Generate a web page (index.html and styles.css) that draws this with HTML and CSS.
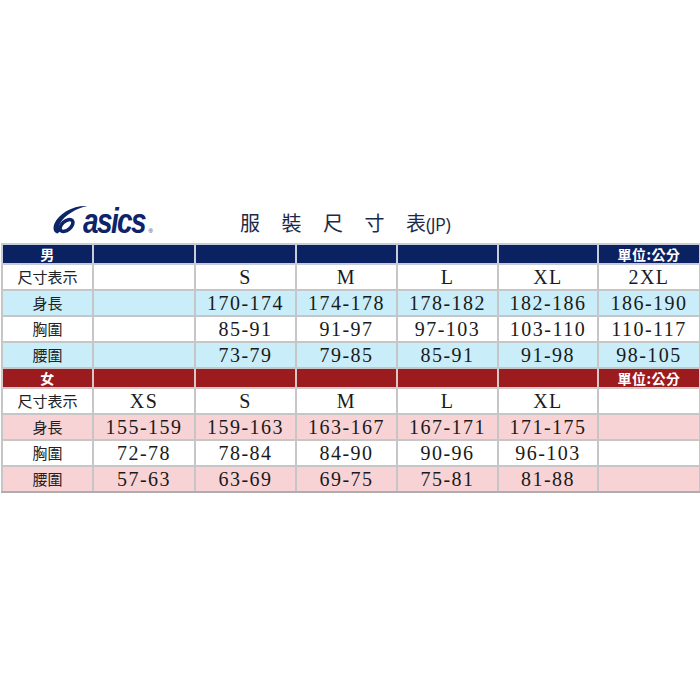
FILE: index.html
```html
<!DOCTYPE html>
<html lang="zh-Hant">
<head>
<meta charset="utf-8">
<link rel="stylesheet" href="styles.css">
</head>
<body>
<div class="page">
  <div class="top">
    <div class="logo">
      <svg class="swoosh" width="38" height="30" viewBox="0 0 36 30">
        <path d="M35.5 1 C22 0 7 8 2.5 18.5 C0.5 23.5 1.5 27.5 5.5 28.5 L8.8 25.8 C6.5 24.8 6.3 21.5 8.3 18 C13 10 24 3.5 35.5 1 Z" fill="#0d2469"/>
        <ellipse cx="14.5" cy="20.5" rx="7.6" ry="4.4" transform="rotate(-40 14.5 20.5)" fill="none" stroke="#0d2469" stroke-width="3.6"/>
      </svg>
      <span class="word">asics</span><span class="reg">®</span>
    </div>
    <div class="title">服 裝 尺 寸 表<span class="jp">(JP)</span></div>
  </div>
  <table class="chart">
    <colgroup>
      <col class="c1"><col class="c2"><col class="c3"><col class="c4"><col class="c5"><col class="c6"><col class="c7">
    </colgroup>
    <tbody>
      <tr class="head men"><th>男</th><th></th><th></th><th></th><th></th><th></th><th>單位:公分</th></tr>
      <tr class="plain"><td class="lbl">尺寸表示</td><td></td><td>S</td><td>M</td><td>L</td><td>XL</td><td>2XL</td></tr>
      <tr class="blue"><td class="lbl">身長</td><td></td><td>170-174</td><td>174-178</td><td>178-182</td><td>182-186</td><td>186-190</td></tr>
      <tr class="plain"><td class="lbl">胸圍</td><td></td><td>85-91</td><td>91-97</td><td>97-103</td><td>103-110</td><td>110-117</td></tr>
      <tr class="blue"><td class="lbl">腰圍</td><td></td><td>73-79</td><td>79-85</td><td>85-91</td><td>91-98</td><td>98-105</td></tr>
      <tr class="head women"><th>女</th><th></th><th></th><th></th><th></th><th></th><th>單位:公分</th></tr>
      <tr class="plain"><td class="lbl">尺寸表示</td><td>XS</td><td>S</td><td>M</td><td>L</td><td>XL</td><td></td></tr>
      <tr class="pink"><td class="lbl">身長</td><td>155-159</td><td>159-163</td><td>163-167</td><td>167-171</td><td>171-175</td><td></td></tr>
      <tr class="plain"><td class="lbl">胸圍</td><td>72-78</td><td>78-84</td><td>84-90</td><td>90-96</td><td>96-103</td><td></td></tr>
      <tr class="pink"><td class="lbl">腰圍</td><td>57-63</td><td>63-69</td><td>69-75</td><td>75-81</td><td>81-88</td><td></td></tr>
    </tbody>
  </table>
</div>
</body>
</html>
```
FILE: styles.css
```css
html, body {
  margin: 0;
  padding: 0;
  background: #ffffff;
}
.page {
  width: 700px;
  height: 700px;
  padding-top: 203px;
  box-sizing: border-box;
}
.top {
  display: flex;
  align-items: flex-end;
  height: 40px;
  padding-left: 51px;
}
.logo {
  display: flex;
  align-items: flex-end;
  width: 189px;
  height: 34px;
  margin-bottom: 9px;
}
.swoosh {
  display: block;
  margin-bottom: -1px;
}
.word {
  display: inline-block;
  font-family: "Liberation Sans", sans-serif;
  font-weight: bold;
  font-style: italic;
  font-size: 35px;
  letter-spacing: -2px;
  line-height: 26px;
  height: 26px;
  color: #0d2469;
  margin-left: -6px;
  margin-right: -12px;
  transform: scaleX(0.8);
  transform-origin: left bottom;
}
.reg {
  font-family: "Liberation Sans", sans-serif;
  font-size: 6px;
  line-height: 6px;
  color: #0d2469;
  margin-bottom: 0px;
}
.title {
  font-family: "Noto Sans CJK TC", "Noto Sans", sans-serif;
  font-size: 20px;
  line-height: 30px;
  color: #1c2a48;
  word-spacing: 17px;
  margin-bottom: 4px;
}
.jp {
  font-family: "Open Sans", "Noto Sans", sans-serif;
  font-size: 18px;
  letter-spacing: -0.5px;
  word-spacing: 0;
}
.chart {
  margin-left: 1px;
  width: 698px;
  border-collapse: collapse;
  table-layout: fixed;
}
.c1 { width: 91px; }
.c2 { width: 102px; }
.c3 { width: 101px; }
.c4 { width: 101px; }
.c5 { width: 101px; }
.c6 { width: 100px; }
.c7 { width: 102px; }
.chart th, .chart td {
  border: 2px solid #c6c6c6;
  padding: 0;
  text-align: center;
  vertical-align: middle;
  overflow: hidden;
  white-space: nowrap;
}
.chart td {
  height: 24px;
  font-family: "Liberation Serif", serif;
  font-size: 20px;
  letter-spacing: 1.5px;
  color: #1a1a1a;
  line-height: 22px;
}
.chart td.lbl {
  font-family: "Noto Sans CJK TC", "Noto Sans", sans-serif;
  font-size: 15px;
  letter-spacing: 0;
  color: #222222;
}
.chart th {
  height: 18px;
  font-family: "Noto Sans CJK TC", "Noto Sans", sans-serif;
  font-size: 14px;
  font-weight: bold;
  line-height: 18px;
  color: #ffffff;
  letter-spacing: 0.5px;
}
.men th { background: #0b2262; border-color: #c9ccd6; }
.women th { background: #9b1b1f; border-color: #d6c9ca; }
.blue td { background: #c9eef9; }
.pink td { background: #f8d3d6; }
.plain td { background: #ffffff; }
.chart tr:last-child td { border-bottom-color: #aeaeae; }
```
